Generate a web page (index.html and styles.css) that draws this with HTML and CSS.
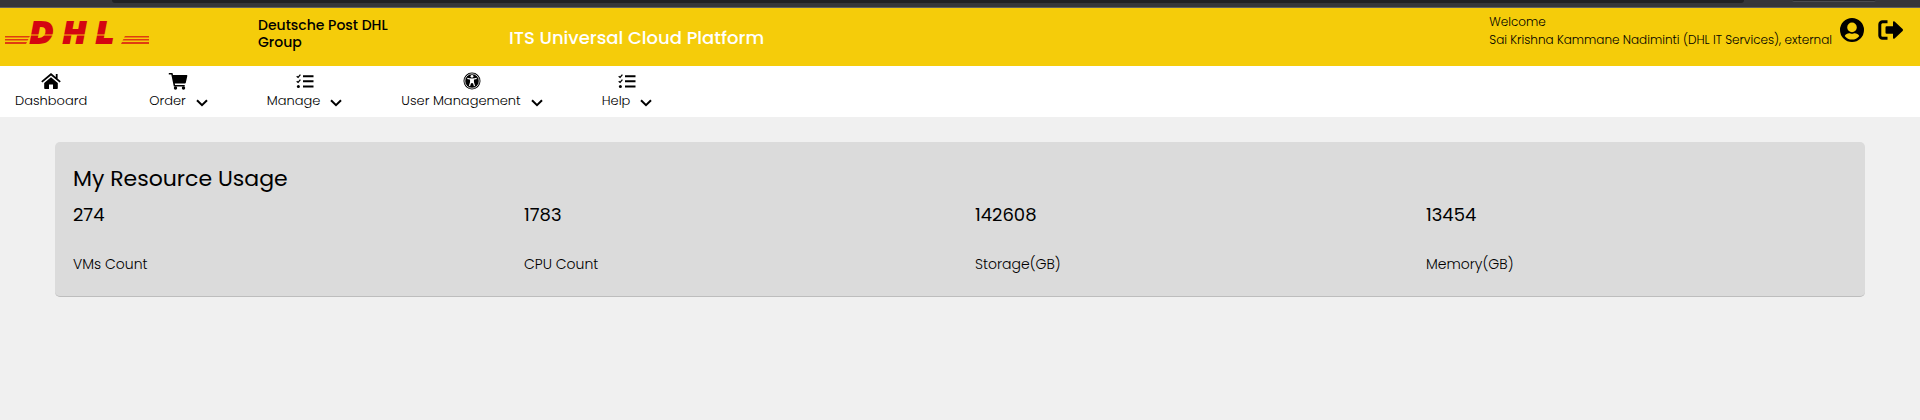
FILE: index.html
```
<!DOCTYPE html>
<html lang="en">
<head>
<meta charset="utf-8">
<title>ITS Universal Cloud Platform</title>
<link rel="stylesheet" href="styles.css">
</head>
<body>
<svg class="defs" aria-hidden="true">
  <symbol id="chevron" viewBox="0 0 12 8"><path d="M1 1.2 6 6.2 11 1.2" fill="none" stroke="currentColor" stroke-width="2"/></symbol>
  <symbol id="tasks" viewBox="0 0 18 14">
    <path d="M.7 2.2 2.1 3.4 4.4.7M.7 7.2 2.1 8.4 4.4 5.7" fill="none" stroke="currentColor" stroke-width="1.3"/>
    <circle cx="2.4" cy="12.4" r="1.5"/><path d="M7 1.2h10.5v2H7zM7 6.2h10.5v2H7zM7 11.4h10.5v2H7z"/>
  </symbol>
</svg>
<div class="browser-edge"><span class="address-edge"></span><span class="button-edge"></span></div>
<header class="header">
  <a class="logo" href="#" aria-label="DHL">
    <svg width="144" height="38" viewBox="0 -8 144 38">
      <g class="logo-stripes"><path d="M0 13h25l-1 1.500H0zM0 16h23.500l-1 1.500H0zM0 19h22l-1 2H0zM120 13h24v1.500h-25zM118.500 16H144v1.500h-26.500zM117 19h27v2h-28z"/></g>
      <text class="logo-text" x="25 58 91" y="20">DHL</text>
      <path class="logo-cut" d="M22 12h92"/>
    </svg>
  </a>
  <p class="company">Deutsche Post DHL Group</p>
  <h1 class="platform">ITS Universal Cloud Platform</h1>
  <div class="account">
    <p class="welcome">Welcome<br>Sai Krishna Kammane Nadiminti (DHL IT Services), external</p>
    <button class="icon-button" type="button" aria-label="Profile">
      <svg width="24" height="24" viewBox="0 0 24 24"><path fill-rule="evenodd" d="M12 0a12 12 0 1 1 0 24 12 12 0 0 1 0-24zM12 4.6a4.8 4.8 0 1 0 0 9.6 4.8 4.8 0 0 0 0-9.6zM4.7 18.1a9.4 9.4 0 0 0 14.6 0c-1-1.9-2.6-2.8-4.6-2.8-.8 0-1.500.5-2.700.5s-1.900-.5-2.700-.5c-2 0-3.600.9-4.600 2.800z"/></svg>
    </button>
    <button class="icon-button" type="button" aria-label="Log out">
      <svg width="26" height="20" viewBox="0 0 26 20"><path d="M9.500 1.800H4.500a2.700 2.700 0 0 0-2.700 2.700v11a2.700 2.700 0 0 0 2.700 2.700h5" fill="none" stroke="currentColor" stroke-width="3"/><path d="M7.500 7.500q0-1.200 1.200-1.200H15V2.300q0-1.800 1.600-.8l8 7.600q.9.900 0 1.800l-8 7.600q-1.600 1-1.600-.8v-4H8.700q-1.200 0-1.200-1.200z"/></svg>
    </button>
  </div>
</header>
<nav class="nav">
  <a class="nav-item nav-home" href="#">
    <svg width="20" height="18" viewBox="0 0 20 18"><path d="M10 5.200 16.800 11v5.200q0 .8-.8.8h-4v-4.500H8V17H4q-.8 0-.8-.8V11z"/><path d="M.8 9.900 10 2.200l9.200 7.700M15.700 2v4.500" fill="none" stroke="currentColor" stroke-width="1.800"/></svg>
    <span class="nav-label">Dashboard</span>
  </a>
  <button class="nav-item" type="button">
    <svg width="20" height="18" viewBox="0 0 20 18"><path d="M.8 1h3.700l.5 2h13.700q.8 0 .6.900l-1.500 6.800q-.2.700-.9.700H6.800l.3 1.600h9.600v1.500H5.800L3.300 2.600H.8z"/><circle cx="7.500" cy="16" r="1.700"/><circle cx="15.500" cy="16" r="1.700"/></svg>
    <span class="nav-label">Order<svg class="chevron"><use href="#chevron"/></svg></span>
  </button>
  <button class="nav-item" type="button">
    <svg width="18" height="18"><use href="#tasks" y="2" width="18" height="14"/></svg>
    <span class="nav-label">Manage<svg class="chevron"><use href="#chevron"/></svg></span>
  </button>
  <button class="nav-item" type="button">
    <svg width="18" height="18" viewBox="0 0 18 18"><circle cx="9" cy="9" r="8.500"/><circle cx="9" cy="9" r="7.200" fill="none" stroke="#fff" stroke-width=".8"/><circle cx="9" cy="4.300" r="1.400" fill="#fff"/><path d="M4.300 6.300 7.800 7.200v2.600L6.500 14M13.700 6.300l-3.500.9v2.600l1.300 4.200" fill="none" stroke="#fff" stroke-width="1.200"/><path d="M7.300 6.500h3.400v4.700H7.300z" fill="#fff"/></svg>
    <span class="nav-label">User Management<svg class="chevron"><use href="#chevron"/></svg></span>
  </button>
  <button class="nav-item" type="button">
    <svg width="18" height="18"><use href="#tasks" y="2" width="18" height="14"/></svg>
    <span class="nav-label">Help<svg class="chevron"><use href="#chevron"/></svg></span>
  </button>
</nav>
<main class="content">
  <section class="card">
    <h2 class="card-title">My Resource Usage</h2>
    <dl class="stats">
      <div class="stat"><dt>VMs Count</dt><dd>274</dd></div>
      <div class="stat"><dt>CPU Count</dt><dd>1783</dd></div>
      <div class="stat"><dt>Storage(GB)</dt><dd>142608</dd></div>
      <div class="stat"><dt>Memory(GB)</dt><dd>13454</dd></div>
    </dl>
  </section>
</main>
</body>
</html>
```
FILE: styles.css
```
* { box-sizing: border-box; }
body { margin: 0; background: #f0f0f0; color: #000; font-family: Poppins, Inter, "Liberation Sans", sans-serif; font-size: 14px; }
p, h1, h2, dl, dd { margin: 0; }
svg { display: block; fill: currentColor; }
.defs { position: absolute; width: 0; height: 0; }
.browser-edge { display: flex; gap: 48px; height: 8px; padding: 0 44px 0 112px; background: #35363a; border-bottom: 1px solid #5f6064; }
.address-edge { flex: 1; height: 3px; background: #202124; border-radius: 0 0 8px 8px; }
.button-edge { width: 84px; height: 2px; background: #292a2d; border-bottom: 1px solid #4b4c50; border-radius: 0 0 8px 8px; }
.header { display: flex; align-items: flex-start; min-height: 58px; padding: 0 16px 0 5px; background: #f5cc0a; }
.logo { width: 253px; padding-top: 7px; color: #d40511; }
.logo-stripes { fill: #e03c10; }
.logo-text { font: italic bold 28px "DejaVu Sans", sans-serif; stroke: #d40511; stroke-width: 2; }
.logo-cut { stroke: #f5cc0a; stroke-width: 1; }
.company { width: 150px; margin-right: 101px; padding-top: 9px; font-weight: 500; line-height: 17px; }
.platform { padding-top: 18px; color: #fff; font-size: 18px; font-weight: 500; line-height: 24px; }
.account { display: flex; align-items: flex-start; gap: 8px; margin-left: auto; padding-top: 5px; }
.welcome { font-size: 12px; font-weight: 300; line-height: 18px; }
.icon-button { display: flex; align-items: center; height: 34px; padding: 0; border: 0; background: none; color: #000; }
.icon-button + .icon-button { margin-left: 6px; }
.nav { display: flex; gap: 59px; padding: 6px 15px 8px; background: #fff; }
.nav-home { margin-right: 3px; }
.nav-item { display: flex; flex-direction: column; align-items: center; padding: 0; border: 0; background: none; color: #000; font: 300 13px/17px Poppins, Inter, "Liberation Sans", sans-serif; text-decoration: none; }
.nav-label { display: flex; align-items: center; gap: 10px; height: 17px; margin-top: 2px; }
.chevron { width: 12px; height: 8px; margin-top: 4px; }
.content { padding: 25px 55px; }
.card { padding: 24px 3px 22px; background: #dbdbdb; border-bottom: 1px solid #bdbdbd; border-radius: 5px; }
.card-title { padding: 0 15px; font-size: 22px; font-weight: 400; line-height: 26px; }
.stats { display: grid; grid-template-columns: repeat(4, 1fr); margin-top: 12px; }
.stat { display: flex; flex-direction: column-reverse; gap: 28px; padding: 0 15px; }
.stat dt { font-weight: 300; line-height: 20px; }
.stat dd { font-size: 18px; font-weight: 400; line-height: 22px; }
```
